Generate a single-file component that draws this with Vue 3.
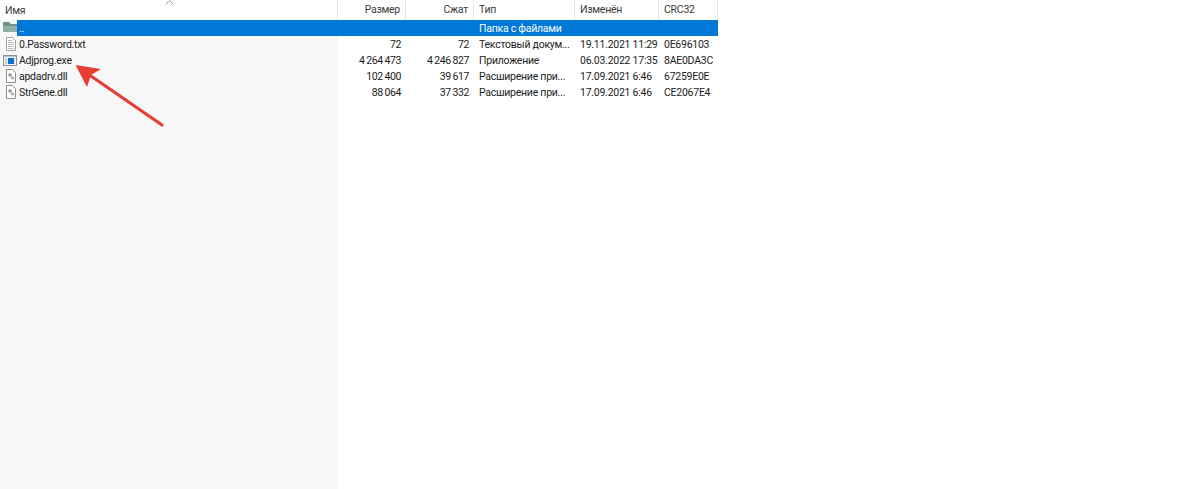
<script setup>
const cols = [
  { label: 'Размер', w: 68, right: true },
  { label: 'Сжат', w: 68, right: true },
  { label: 'Тип', w: 101 },
  { label: 'Изменён', w: 84 },
  { label: 'CRC32', w: 59 }
]
const rows = [
  { name: '0.Password.txt', icon: 'txt', size: '72', packed: '72', type: 'Текстовый докум...', date: '19.11.2021 11:29', crc: '0E696103' },
  { name: 'Adjprog.exe', icon: 'exe', size: '4 264 473', packed: '4 246 827', type: 'Приложение', date: '06.03.2022 17:35', crc: '8AE0DA3C' },
  { name: 'apdadrv.dll', icon: 'dll', size: '102 400', packed: '39 617', type: 'Расширение при...', date: '17.09.2021 6:46', crc: '67259E0E' },
  { name: 'StrGene.dll', icon: 'dll', size: '88 064', packed: '37 332', type: 'Расширение при...', date: '17.09.2021 6:46', crc: 'CE2067E4' }
]
</script>

<template>
  <div class="page">
    <div class="table">
      <div class="row head">
        <div class="name-cell head-name">
          <span class="head-label">Имя</span>
          <svg class="sort" width="9" height="5" viewBox="0 0 9 5"><path d="M0.5 4.5 L4.5 0.5 L8.5 4.5" fill="none" stroke="#9a9a9a" /></svg>
        </div>
        <div v-for="c in cols" :key="c.label" class="cell hcell" :class="{ right: c.right }" :style="{ width: c.w + 'px' }">{{ c.label }}</div>
      </div>
      <div class="row selected">
        <div class="name-cell">
          <svg class="icon" width="16" height="16" viewBox="0 0 16 16">
            <path d="M1 3 Q1 2 2 2 H7 L9 4 H15 V12 H2 Q1 12 1 11 Z" fill="#6f8f87" />
            <path d="M1 6 H15 V12 H2 Q1 12 1 11 Z" fill="#8fb0a4" />
          </svg>
          <span class="sel-name">..</span>
        </div>
        <div class="sel-type">Папка с файлами</div>
      </div>
      <div v-for="r in rows" :key="r.name" class="row">
        <div class="name-cell">
          <svg v-if="r.icon === 'txt'" class="icon" width="16" height="16" viewBox="0 0 16 16">
            <path d="M4.5 1.5 H10.5 L13.5 4.5 V14.5 H4.5 Z" fill="#fff" stroke="#a0a0a0" />
            <path d="M6 4.5 H10 M6 6.5 H12 M6 8.5 H12 M6 10.5 H12 M6 12.5 H12" stroke="#bcbcbc" />
          </svg>
          <svg v-else-if="r.icon === 'exe'" class="icon" width="16" height="16" viewBox="0 0 16 16">
            <rect x="1.5" y="3.5" width="13" height="10" fill="#eef1f5" stroke="#8a94a0" />
            <rect x="2" y="4" width="12" height="1" fill="#b8c4d2" />
            <rect x="6" y="6" width="6" height="6" fill="#0a6fd0" />
            <rect x="3" y="6" width="2" height="6" fill="#c7ced7" />
          </svg>
          <svg v-else class="icon" width="16" height="16" viewBox="0 0 16 16">
            <path d="M4.5 1.5 H10.5 L13.5 4.5 V14.5 H4.5 Z" fill="#fff" stroke="#8f8f8f" />
            <circle cx="8" cy="7" r="1.8" fill="#8d99a8" />
            <circle cx="10.5" cy="10" r="1.8" fill="#b0b8c2" />
          </svg>
          <span class="fname">{{ r.name }}</span>
        </div>
        <div class="cell right num" :style="{ width: cols[0].w + 'px' }">{{ r.size }}</div>
        <div class="cell right num" :style="{ width: cols[1].w + 'px' }">{{ r.packed }}</div>
        <div class="cell" :style="{ width: cols[2].w + 'px' }">{{ r.type }}</div>
        <div class="cell" :style="{ width: cols[3].w + 'px' }">{{ r.date }}</div>
        <div class="cell" :style="{ width: cols[4].w + 'px' }">{{ r.crc }}</div>
      </div>
    </div>
    <svg class="arrow" width="120" height="80" viewBox="60 55 120 80">
      <path d="M162 125 L88 74" stroke="#e53f33" stroke-width="3.2" stroke-linecap="round" fill="none" />
      <path d="M75.5 65 L101 69 L91 75 L87 87 Z" fill="#e53f33" />
    </svg>
  </div>
</template>

<style>
html, body { margin: 0; background: #fff; }
</style>

<style scoped>
.page {
  position: relative;
  width: 1200px;
  height: 489px;
  overflow: hidden;
  background: #fff;
  font-family: Roboto, "Noto Sans", sans-serif;
  font-size: 10.5px;
  letter-spacing: -0.25px;
  color: #1c1c1c;
}
.table {
  width: 718px;
  height: 489px;
  background: linear-gradient(to right, #f7f7f7 338px, #fff 338px);
}
.row {
  display: flex;
  height: 16px;
  line-height: 17px;
  white-space: nowrap;
}
.head {
  height: 20px;
  line-height: 19px;
  background: #fff;
  color: #3a3a3a;
}
.name-cell {
  position: relative;
  width: 338px;
  flex: none;
  display: flex;
  align-items: center;
  box-sizing: border-box;
}
.head-name { border-right: 1px solid #e6e6e6; }
.head-label { padding-left: 5px; }
.sort { position: absolute; left: 165px; top: 0; }
.icon { flex: none; margin-left: 2px; }
.fname { margin-left: 1px; }
.cell {
  flex: none;
  box-sizing: border-box;
  padding: 0 5px;
}
.num { letter-spacing: -0.4px; word-spacing: -0.5px; }
.hcell { border-right: 1px solid #e6e6e6; }
.right { text-align: right; }
.selected {
  background: linear-gradient(to right, transparent 17px, #0078d7 17px);
  color: #fff;
}
.sel-name { margin-left: 1px; }
.sel-type { margin-left: 141px; }
.arrow { position: absolute; left: 60px; top: 55px; }
</style>
